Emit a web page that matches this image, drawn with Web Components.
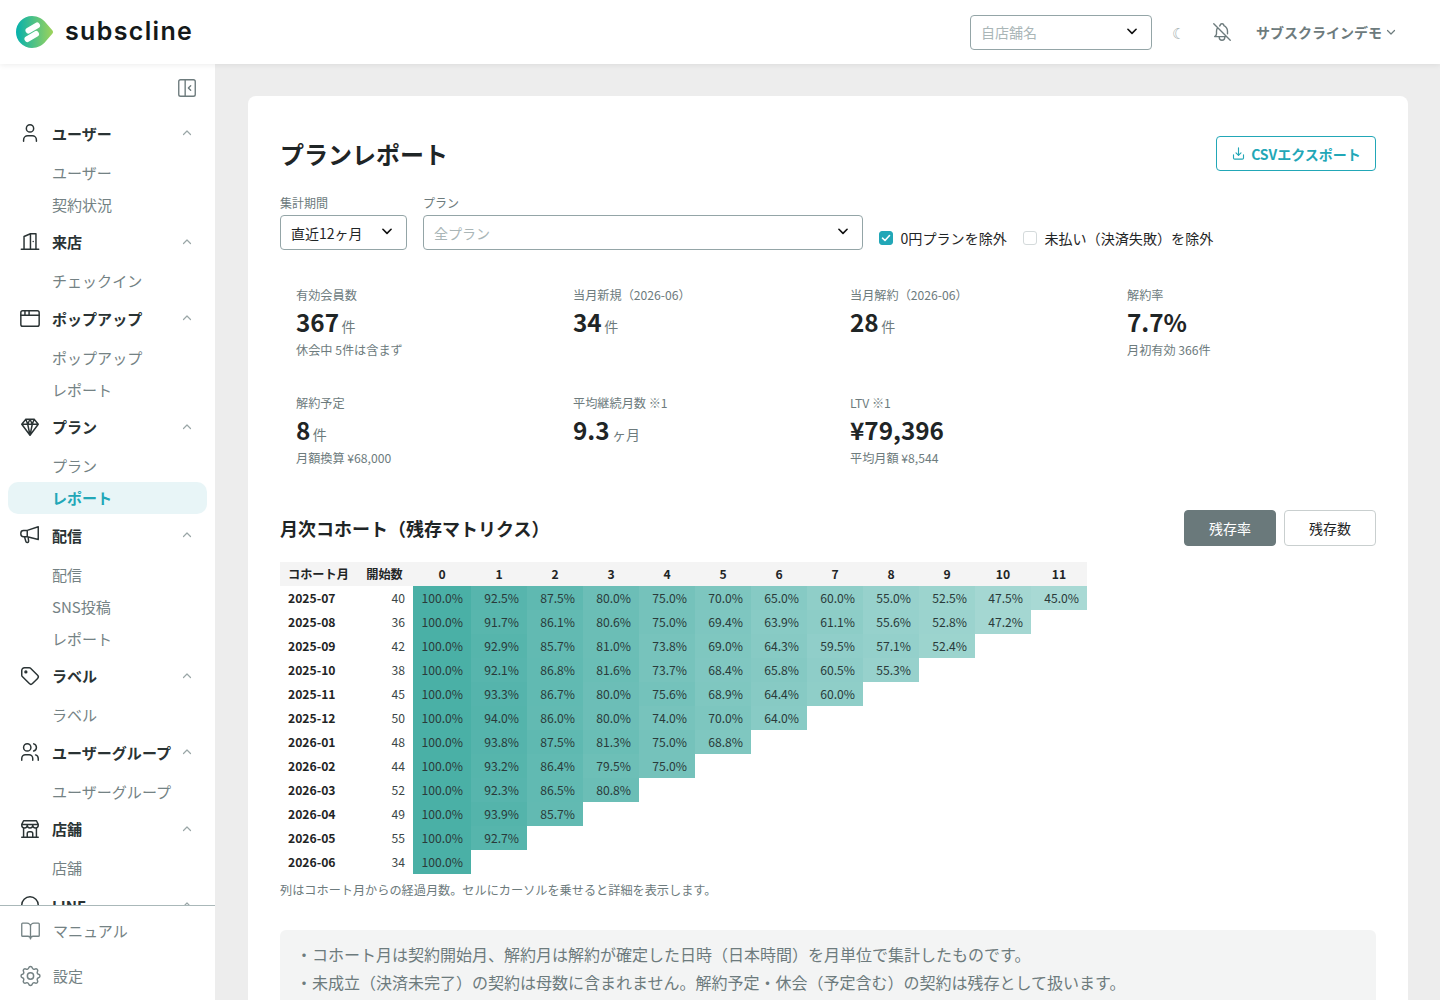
<!DOCTYPE html>
<html lang="ja">
<head>
<meta charset="utf-8">
<title>プランレポート</title>
<style>
    html, body { margin: 0; height: 100%; overflow: hidden; }
    body { font-family: "Noto Sans CJK JP", "Noto Sans", sans-serif; color: #1f2526; background: #ededed; }
</style>
</head>
<body>
<app-shell>
    <app-header slot="header"></app-header>
    <side-nav slot="nav"></side-nav>
    <plan-report></plan-report>
</app-shell>

<script>
const ICONS = {
    user: '<circle cx="12" cy="7" r="4"/><path d="M5 21v-1.500a4.500 4.500 0 0 1 4.500-4.500h5a4.500 4.500 0 0 1 4.500 4.500V21"/>',
    door: '<path d="M2.500 20h19M5.500 20V6l7-3h6v17M12.500 3v17M15.500 11.500v.01"/>',
    browser: '<rect x="2" y="4" width="20" height="17" rx="2"/><path d="M2 9h20M6.500 4v5M11 4v5"/>',
    gem: '<path d="M7.500 3.500h9L21 9l-9 12L3 9zM3 9h18M7.500 3.500l2 5.500 2.500 12 2.500-12 2-5.500M9.500 9 12 3.500 14.500 9"/>',
    megaphone: '<path d="M21 3v13M21 3 9 7H5a3 3 0 0 0-3 3v1a3 3 0 0 0 3 3h4l12 3M9 7v7M6 14l1.500 5a1.500 1.500 0 0 0 3-.5L10 15"/>',
    tag: '<circle cx="7.500" cy="7.500" r="1"/><path d="M3 6v5.172a2 2 0 0 0 .586 1.414l7.710 7.710a2.410 2.410 0 0 0 3.408 0l5.592-5.592a2.410 2.410 0 0 0 0-3.408l-7.710-7.710a2 2 0 0 0-1.414-.586H6a3 3 0 0 0-3 3z"/>',
    users: '<circle cx="9" cy="7" r="4"/><path d="M3 21v-2a4 4 0 0 1 4-4h4a4 4 0 0 1 4 4v2M16 3.130a4 4 0 0 1 0 7.750M21 21v-2a4 4 0 0 0-3-3.850"/>',
    store: '<path d="M3 21h18M3 7v1a3 3 0 0 0 6 0V7m0 1a3 3 0 0 0 6 0V7m0 1a3 3 0 0 0 6 0V7H3l2-4h14l2 4M5 21V10.850M19 21V10.850M9 21v-4a2 2 0 0 1 2-2h2a2 2 0 0 1 2 2v4"/>',
    line: '<circle cx="12" cy="12" r="9"/>',
    book: '<path d="M12 7v14M3 18a1 1 0 0 1-1-1V4a1 1 0 0 1 1-1h5a4 4 0 0 1 4 4 4 4 0 0 1 4-4h5a1 1 0 0 1 1 1v13a1 1 0 0 1-1 1h-6a3 3 0 0 0-3 3 3 3 0 0 0-3-3z"/>',
    gear: '<path d="M10.325 4.317c.426-1.756 2.924-1.756 3.350 0a1.724 1.724 0 0 0 2.573 1.066c1.543-.940 3.310.826 2.370 2.370a1.724 1.724 0 0 0 1.065 2.572c1.756.426 1.756 2.924 0 3.350a1.724 1.724 0 0 0-1.066 2.573c.940 1.543-.826 3.310-2.370 2.370a1.724 1.724 0 0 0-2.572 1.065c-.426 1.756-2.924 1.756-3.350 0a1.724 1.724 0 0 0-2.573-1.066c-1.543.940-3.310-.826-2.370-2.370a1.724 1.724 0 0 0-1.065-2.572c-1.756-.426-1.756-2.924 0-3.350a1.724 1.724 0 0 0 1.066-2.573c-.940-1.543.826-3.310 2.370-2.370 1 .608 2.296.070 2.572-1.065z"/><circle cx="12" cy="12" r="3"/>',
    bellOff: '<path d="M9.346 5.353c.210-.129.428-.246.654-.353a2 2 0 1 1 4 0 7 7 0 0 1 4 6v3m-1 3H4a4 4 0 0 0 2-3v-3a7 7 0 0 1 1.273-3.707M9 17v1a3 3 0 0 0 6 0v-1M3 3l18 18"/>',
    download: '<path d="M4 14v5a2 2 0 0 0 2 2h12a2 2 0 0 0 2-2v-5M8 11l4 4 4-4M12 3v12"/>',
    collapse: '<rect x="3" y="3" width="18" height="18" rx="2"/><path d="M10 3v18M16 9.500 13.500 12l2.500 2.500"/>'
};

const icon = (name, size, width, box = '0 0 24 24') =>
    `<svg width="${size}" height="${size}" viewBox="${box}" fill="none" stroke="currentColor" stroke-width="${width}" stroke-linecap="round" stroke-linejoin="round">${ICONS[name]}</svg>`;

const chevron = (dir, size, width) =>
    `<svg width="${size}" height="${size}" viewBox="0 0 12 12" fill="none" stroke="currentColor" stroke-width="${width}" stroke-linecap="round" stroke-linejoin="round"><path d="${dir === 'up' ? 'M2.500 7.500 6 4l3.500 3.500' : 'M2.500 4.500 6 8l3.500-3.500'}"/></svg>`;

class AppShell extends HTMLElement {
    constructor() {
        super();
        this.attachShadow({mode: 'open'});
        this.shadowRoot.innerHTML = `
            <style>
                :host { display: grid; grid-template-columns: 215px 1fr; grid-template-rows: 64px 1fr; height: 100vh; overflow: hidden; }
                .top { grid-column: 1 / 3; position: relative; z-index: 2; }
                .nav { min-height: 0; }
                main { min-height: 0; overflow: hidden; padding: 32px 32px 0 33px; }
            </style>
            <div class="top"><slot name="header"></slot></div>
            <div class="nav"><slot name="nav"></slot></div>
            <main><slot></slot></main>
        `;
    }
}
customElements.define('app-shell', AppShell);

class FieldSelect extends HTMLElement {
    constructor() {
        super();
        this.attachShadow({mode: 'open'});
        const placeholder = this.hasAttribute('placeholder');
        this.shadowRoot.innerHTML = `
            <style>
                :host { display: block; }
                .box { box-sizing: border-box; height: 35px; display: flex; align-items: center; justify-content: space-between; padding: 0 12px 0 10px; background: #fff; border: 1px solid #94a5a7; border-radius: 4px; font-size: 14px; color: ${placeholder ? '#aab6b7' : '#1f2526'}; }
                svg { color: #111; display: block; margin-top: -3px; }
            </style>
            <div class="box"><span>${this.getAttribute('value')}</span>${chevron('down', 14, 1.4)}</div>
        `;
    }
}
customElements.define('field-select', FieldSelect);

class AppHeader extends HTMLElement {
    constructor() {
        super();
        this.attachShadow({mode: 'open'});
        this.shadowRoot.innerHTML = `
            <style>
                :host { display: flex; align-items: center; height: 64px; background: #fff; box-shadow: 0 1px 6px rgba(0,0,0,0.08); padding: 0 43px 0 16px; box-sizing: border-box; }
                .logo { display: flex; align-items: center; gap: 11px; }
                .logo svg { display: block; }
                .word { font-family: Inter, sans-serif; font-weight: 600; font-size: 25px; letter-spacing: 1.350px; color: #14191a; line-height: 30px; margin-top: -2px; }
                .right { margin-left: auto; display: flex; align-items: center; }
                field-select { width: 182px; }
                .moon { width: 16px; margin-left: 18px; text-align: center; font-size: 15px; color: #a3afb0; }
                .bell { display: block; margin-left: 25px; color: #6d7b7d; }
                .bell svg { display: block; }
                .account { display: flex; align-items: center; gap: 3px; margin-left: 23px; font-size: 14px; font-weight: 700; color: #6d7b7d; }
                .account svg { display: block; }
            </style>
            <div class="logo">
                <svg width="38" height="32" viewBox="0 0 38 32">
                    <defs><linearGradient id="lg" x1="0" x2="1" y1="0.5" y2="0.5"><stop offset="0" stop-color="#06b1ad"/><stop offset="1" stop-color="#9ed35a"/></linearGradient></defs>
                    <path d="M16 0c6 0 11 3 14 7l6.500 7.500a2.300 2.300 0 0 1 0 3L30 25c-3 4-8 7-14 7a16 16 0 0 1 0-32z" fill="url(#lg)"/>
                    <path d="M21 9.500 12.500 14.500M20 18 11.500 23" stroke="#fff" stroke-width="6" stroke-linecap="round" fill="none"/>
                </svg>
                <span class="word">subscline</span>
            </div>
            <div class="right">
                <field-select placeholder value="自店舗名"></field-select>
                <span class="moon">☾</span>
                <span class="bell">${icon('bellOff', 22, 1.5)}</span>
                <span class="account">サブスクラインデモ${chevron('down', 12, 1.2)}</span>
            </div>
        `;
    }
}
customElements.define('app-header', AppHeader);

class NavGroup extends HTMLElement {
    constructor() {
        super();
        this.attachShadow({mode: 'open'});
        this.shadowRoot.innerHTML = `
            <style>
                :host { display: block; }
                .head { box-sizing: border-box; height: 44.500px; display: flex; align-items: center; padding: 0 22px 1px 20px; font-size: 15.040px; font-weight: 700; color: #2a3334; }
                .ico { width: 20px; height: 22px; margin-right: 12px; display: flex; align-items: center; justify-content: center; flex: none; }
                .ico svg { display: block; flex: none; }
                .label { flex: 1; white-space: nowrap; }
                .caret { color: #9aa6a7; display: block; }
            </style>
            <div class="head">
                <span class="ico">${icon(this.getAttribute('icon'), 22, 1.6)}</span>
                <span class="label">${this.getAttribute('label')}</span>
                <svg class="caret" width="12" height="12" viewBox="0 0 12 12" fill="none" stroke="currentColor" stroke-width="1.200" stroke-linecap="round" stroke-linejoin="round"><path d="M2.500 7.500 6 4l3.500 3.500"/></svg>
            </div>
            <slot></slot>
        `;
    }
}
customElements.define('nav-group', NavGroup);

class NavItem extends HTMLElement {
    constructor() {
        super();
        this.attachShadow({mode: 'open'});
        this.shadowRoot.innerHTML = `
            <style>
                :host { display: flex; align-items: center; height: 32px; margin: 0 8px; padding-left: 44px; font-size: 15.040px; color: #748284; border-radius: 10px; }
                :host([active]) { background: #e8f5f7; color: #22a7b7; font-weight: 700; }
            </style>
            <slot></slot>
        `;
    }
}
customElements.define('nav-item', NavItem);

class SideNav extends HTMLElement {
    constructor() {
        super();
        this.attachShadow({mode: 'open'});
        this.shadowRoot.innerHTML = `
            <style>
                :host { display: flex; flex-direction: column; height: 100%; background: #fff; overflow: hidden; }
                .toggle { display: flex; justify-content: flex-end; padding: 13px 17px 0 0; height: 34.700px; color: #6d7b7d; flex: none; }
                .toggle svg { display: block; }
                .scroll { flex: 1; min-height: 0; overflow: hidden; }
                .foot { flex: none; border-top: 1px solid #aab8b9; height: 95px; box-sizing: border-box; padding-top: 2px; }
                .foot div { display: flex; align-items: center; height: 45px; padding-left: 20px; font-size: 15.040px; color: #748284; gap: 12px; }
                .foot svg { display: block; width: 21px; flex: none; }
            </style>
            <div class="toggle">${icon('collapse', 22, 1.5)}</div>
            <div class="scroll">
                <nav-group icon="user" label="ユーザー"><nav-item>ユーザー</nav-item><nav-item>契約状況</nav-item></nav-group>
                <nav-group icon="door" label="来店"><nav-item>チェックイン</nav-item></nav-group>
                <nav-group icon="browser" label="ポップアップ"><nav-item>ポップアップ</nav-item><nav-item>レポート</nav-item></nav-group>
                <nav-group icon="gem" label="プラン"><nav-item>プラン</nav-item><nav-item active>レポート</nav-item></nav-group>
                <nav-group icon="megaphone" label="配信"><nav-item>配信</nav-item><nav-item>SNS投稿</nav-item><nav-item>レポート</nav-item></nav-group>
                <nav-group icon="tag" label="ラベル"><nav-item>ラベル</nav-item></nav-group>
                <nav-group icon="users" label="ユーザーグループ"><nav-item>ユーザーグループ</nav-item></nav-group>
                <nav-group icon="store" label="店舗"><nav-item>店舗</nav-item></nav-group>
                <nav-group icon="line" label="LINE"></nav-group>
            </div>
            <div class="foot">
                <div>${icon('book', 22, 1.5)}マニュアル</div>
                <div>${icon('gear', 22, 1.4, '2 2 20 20')}設定</div>
            </div>
        `;
    }
}
customElements.define('side-nav', SideNav);

class KpiTile extends HTMLElement {
    constructor() {
        super();
        this.attachShadow({mode: 'open'});
        const note = this.getAttribute('note');
        const unit = this.getAttribute('unit');
        this.shadowRoot.innerHTML = `
            <style>
                :host { display: block; padding: 16px; height: 96px; box-sizing: border-box; }
                .label { font-size: 12.160px; line-height: 18px; color: #6d7b7d; }
                .value { display: flex; align-items: baseline; gap: 2.500px; height: 37px; line-height: 35px; font-size: 24.320px; font-weight: 700; color: #1f2526; }
                .unit { font-size: 14px; font-weight: 400; color: #6d7b7d; }
                .note { font-size: 12.160px; line-height: 18px; color: #6d7b7d; }
            </style>
            <div class="label">${this.getAttribute('label')}</div>
            <div class="value">${this.getAttribute('value')}${unit ? `<span class="unit">${unit}</span>` : ''}</div>
            ${note ? `<div class="note">${note}</div>` : ''}
        `;
    }
}
customElements.define('kpi-tile', KpiTile);

const COHORTS = [
    ['2025-07', 40, [100.0, 92.5, 87.5, 80.0, 75.0, 70.0, 65.0, 60.0, 55.0, 52.5, 47.5, 45.0]],
    ['2025-08', 36, [100.0, 91.7, 86.1, 80.6, 75.0, 69.4, 63.9, 61.1, 55.6, 52.8, 47.2]],
    ['2025-09', 42, [100.0, 92.9, 85.7, 81.0, 73.8, 69.0, 64.3, 59.5, 57.1, 52.4]],
    ['2025-10', 38, [100.0, 92.1, 86.8, 81.6, 73.7, 68.4, 65.8, 60.5, 55.3]],
    ['2025-11', 45, [100.0, 93.3, 86.7, 80.0, 75.6, 68.9, 64.4, 60.0]],
    ['2025-12', 50, [100.0, 94.0, 86.0, 80.0, 74.0, 70.0, 64.0]],
    ['2026-01', 48, [100.0, 93.8, 87.5, 81.3, 75.0, 68.8]],
    ['2026-02', 44, [100.0, 93.2, 86.4, 79.5, 75.0]],
    ['2026-03', 52, [100.0, 92.3, 86.5, 80.8]],
    ['2026-04', 49, [100.0, 93.9, 85.7]],
    ['2026-05', 55, [100.0, 92.7]],
    ['2026-06', 34, [100.0]]
];

class CohortTable extends HTMLElement {
    constructor() {
        super();
        this.attachShadow({mode: 'open'});
        const cols = [...Array(12).keys()];
        const rows = COHORTS.map(([month, start, rates]) => `
            <tr><td class="month">${month}</td><td class="start">${start}</td>${cols.map(i => {
                if (rates[i] === undefined) return '<td></td>';
                const alpha = 0.71 - (100 - rates[i]) * 0.00673;
                return `<td class="rate" style="background:rgba(0,143,130,${alpha.toFixed(3)})">${rates[i].toFixed(1)}%</td>`;
            }).join('')}</tr>`).join('');
        this.shadowRoot.innerHTML = `
            <style>
                :host { display: block; }
                table { border-collapse: collapse; table-layout: fixed; width: 807px; font-size: 12.160px; }
                th, td { height: 24px; padding: 0; line-height: 24px; }
                thead th { background: #f4f4f4; font-weight: 700; color: #1f2526; text-align: center; }
                th.first { text-align: left; padding-left: 8px; }
                th.second { padding-right: 2px; }
                .month { font-weight: 700; padding-left: 8px; color: #1f2526; }
                .start { text-align: right; padding-right: 8px; color: #3c4647; }
                .rate { text-align: right; padding-right: 8px; color: #2a3a3a; }
            </style>
            <table>
                <colgroup><col style="width:78px"><col style="width:55px"><col style="width:58px">${cols.slice(1).map(() => '<col style="width:56px">').join('')}</colgroup>
                <thead><tr><th class="first">コホート月</th><th class="second">開始数</th>${cols.map(i => `<th>${i}</th>`).join('')}</tr></thead>
                <tbody>${rows}</tbody>
            </table>
        `;
    }
}
customElements.define('cohort-table', CohortTable);

class PlanReport extends HTMLElement {
    constructor() {
        super();
        this.attachShadow({mode: 'open'});
        this.shadowRoot.innerHTML = `
            <style>
                :host { display: block; background: #fff; border-radius: 8px; padding: 40px 32px 32px; width: 1160px; box-sizing: border-box; }
                .title-row { display: flex; align-items: center; justify-content: space-between; height: 35px; }
                h1 { margin: 0; font-size: 24px; font-weight: 700; color: #1f2526; }
                .export { box-sizing: border-box; width: 160px; height: 35px; display: flex; align-items: center; justify-content: center; gap: 5px; border: 1px solid #22a7b7; border-radius: 4px; color: #22a7b7; font-size: 14px; font-weight: 700; }
                .export svg { display: block; }
                .filters { display: flex; align-items: flex-end; gap: 16px; margin-top: 25px; }
                .filters label { display: block; font-size: 12px; line-height: 14px; margin-bottom: 5px; color: #6d7b7d; }
                .period { width: 127px; }
                .plan { width: 440px; }
                .checks { display: flex; gap: 16px; font-size: 14.080px; color: #1f2526; height: 21px; margin-bottom: 0; position: relative; top: -2px; }
                .check { display: flex; align-items: center; gap: 7.500px; white-space: nowrap; }
                .box { box-sizing: border-box; width: 14px; height: 14px; border: 1px solid #d4dadb; border-radius: 3px; display: flex; align-items: center; justify-content: center; }
                .box.on { background: #22a7b7; border-color: #22a7b7; }
                .kpis { display: grid; grid-template-columns: repeat(4, 1fr); gap: 12px; margin-top: 20px; }
                .section { display: flex; align-items: center; justify-content: space-between; margin-top: 36px; height: 36px; }
                h2 { margin: 0; font-size: 18px; font-weight: 700; color: #1f2526; }
                .seg { display: flex; gap: 8px; }
                .seg span { box-sizing: border-box; width: 92px; height: 36px; display: flex; align-items: center; justify-content: center; font-size: 14px; padding-bottom: 1px; border: 1px solid #c9cfcf; border-radius: 4px; color: #1f2526; }
                .seg .on { background: #6a797b; border-color: #6a797b; color: #fff; }
                cohort-table { margin-top: 16px; }
                .hint { margin: 8px 0 0; font-size: 12.160px; line-height: 16px; color: #6d7b7d; }
                .notes { margin-top: 32px; background: #f3f4f4; border-radius: 6px; padding: 10px 16px 16px; font-size: 16px; line-height: 28px; color: #6d7b7d; }
            </style>
            <div class="title-row">
                <h1>プランレポート</h1>
                <div class="export">${icon('download', 15, 1.8)}CSVエクスポート</div>
            </div>
            <div class="filters">
                <div class="period"><label>集計期間</label><field-select value="直近12ヶ月"></field-select></div>
                <div class="plan"><label>プラン</label><field-select placeholder value="全プラン"></field-select></div>
                <div class="checks">
                    <span class="check"><span class="box on"><svg width="10" height="10" viewBox="0 0 10 10" fill="none" stroke="#fff" stroke-width="1.600" stroke-linecap="round" stroke-linejoin="round"><path d="M1.500 5.200 4 7.500l4.500-5"/></svg></span>0円プランを除外</span>
                    <span class="check"><span class="box"></span>未払い（決済失敗）を除外</span>
                </div>
            </div>
            <div class="kpis">
                <kpi-tile label="有効会員数" value="367" unit="件" note="休会中 5件は含まず"></kpi-tile>
                <kpi-tile label="当月新規（2026-06）" value="34" unit="件"></kpi-tile>
                <kpi-tile label="当月解約（2026-06）" value="28" unit="件"></kpi-tile>
                <kpi-tile label="解約率" value="7.7%" note="月初有効 366件"></kpi-tile>
                <kpi-tile label="解約予定" value="8" unit="件" note="月額換算 ¥68,000"></kpi-tile>
                <kpi-tile label="平均継続月数 ※1" value="9.3" unit="ヶ月"></kpi-tile>
                <kpi-tile label="LTV ※1" value="¥79,396" note="平均月額 ¥8,544"></kpi-tile>
            </div>
            <div class="section">
                <h2>月次コホート（残存マトリクス）</h2>
                <div class="seg"><span class="on">残存率</span><span>残存数</span></div>
            </div>
            <cohort-table></cohort-table>
            <p class="hint">列はコホート月からの経過月数。セルにカーソルを乗せると詳細を表示します。</p>
            <div class="notes">
                <div>・コホート月は契約開始月、解約月は解約が確定した日時（日本時間）を月単位で集計したものです。</div>
                <div>・未成立（決済未完了）の契約は母数に含まれません。解約予定・休会（予定含む）の契約は残存として扱います。</div>
            </div>
        `;
    }
}
customElements.define('plan-report', PlanReport);
</script>
</body>
</html>
